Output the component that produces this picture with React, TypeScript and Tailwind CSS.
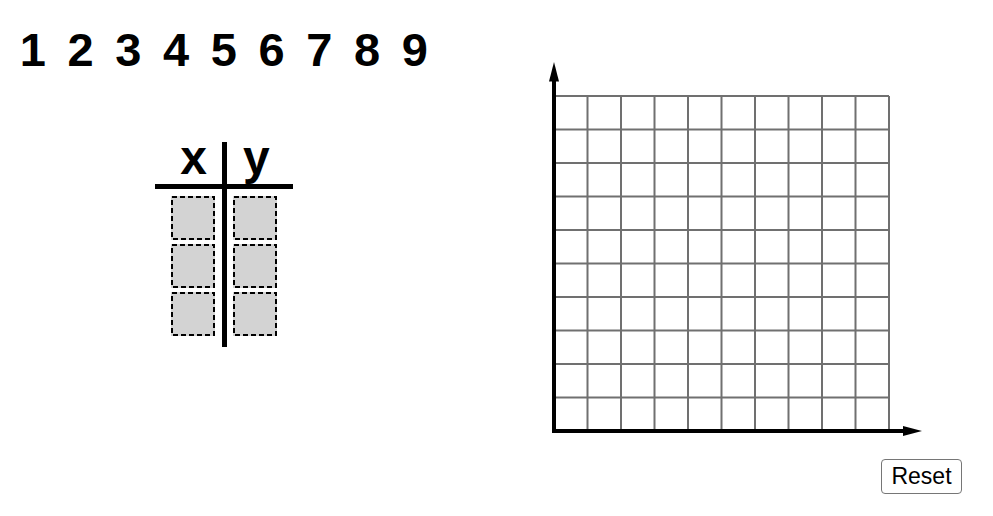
import React from "react";

const digits = ["1", "2", "3", "4", "5", "6", "7", "8", "9"];

function Slot() {
  return (
    <div className="relative w-[44px] h-[44px] bg-[#d3d3d3]">
      <svg width="44" height="44" viewBox="0 0 44 44" className="absolute inset-0">
        <rect x="1" y="1" width="42" height="42" fill="none" stroke="#000" strokeWidth={2} strokeDasharray="5 3" />
      </svg>
    </div>
  );
}

function Graph() {
  const x0 = 9;
  const y0 = 41;
  const c = 33.5;
  const lines: React.ReactNode[] = [];
  for (let i = 0; i <= 10; i++) {
    const x = x0 + c * i;
    lines.push(<line key={"v" + i} x1={x} y1={y0} x2={x} y2={y0 + 10 * c} stroke="#707070" strokeWidth={2} />);
    const y = y0 + c * i;
    lines.push(<line key={"h" + i} x1={x0} y1={y} x2={x0 + 10 * c} y2={y} stroke="#707070" strokeWidth={2} />);
  }
  return (
    <svg width="380" height="385" viewBox="0 0 380 385" className="block">
      {lines}
      <line x1={9} y1={24} x2={9} y2={378} stroke="#000" strokeWidth={4} />
      <polygon points="9,7 4,26.5 14,26.5" fill="#000" />
      <line x1={7} y1={376} x2={360} y2={376} stroke="#000" strokeWidth={4} />
      <polygon points="377,376 358,371 358,381" fill="#000" />
    </svg>
  );
}

export default function App() {
  return (
    <div className="w-[993px] h-[516px] bg-white flex text-black overflow-hidden" style={{ fontFamily: '"Liberation Sans", Arial, sans-serif' }}>
      <div className="w-[545px] flex flex-col">
        <div className="flex pl-[9px] pt-[26px]">
          {digits.map((d) => (
            <span key={d} className="w-[47.75px] text-center text-[47px] leading-none font-bold">
              {d}
            </span>
          ))}
        </div>
        <div className="ml-[155px] mt-[69px] w-[138px] flex flex-col">
          <div className="flex h-[42px]">
            <div className="w-[67px] flex justify-end items-end pr-[15px]">
              <span className="text-[48px] leading-[48px] font-bold mb-[2px]">x</span>
            </div>
            <div className="w-[5px] bg-black" />
            <div className="w-[66px] flex items-end pl-[16px]">
              <span className="text-[48px] leading-[48px] font-bold mb-[2px]">y</span>
            </div>
          </div>
          <div className="h-[5px] bg-black" />
          <div className="flex h-[158px]">
            <div className="w-[67px] flex flex-col items-end pr-[7px] pt-[6.5px] gap-[4px]">
              <Slot />
              <Slot />
              <Slot />
            </div>
            <div className="w-[5px] bg-black" />
            <div className="w-[66px] flex flex-col pl-[5.5px] pt-[6.5px] gap-[4px]">
              <Slot />
              <Slot />
              <Slot />
            </div>
          </div>
        </div>
      </div>
      <div className="flex-1 flex flex-col">
        <div className="mt-[55px]">
          <Graph />
        </div>
        <button className="self-end mr-[31px] mt-[19px] w-[81px] h-[35px] border border-[#767676] rounded-[4px] bg-white text-[23px] leading-none flex items-center justify-center text-black">
          Reset
        </button>
      </div>
    </div>
  );
}
